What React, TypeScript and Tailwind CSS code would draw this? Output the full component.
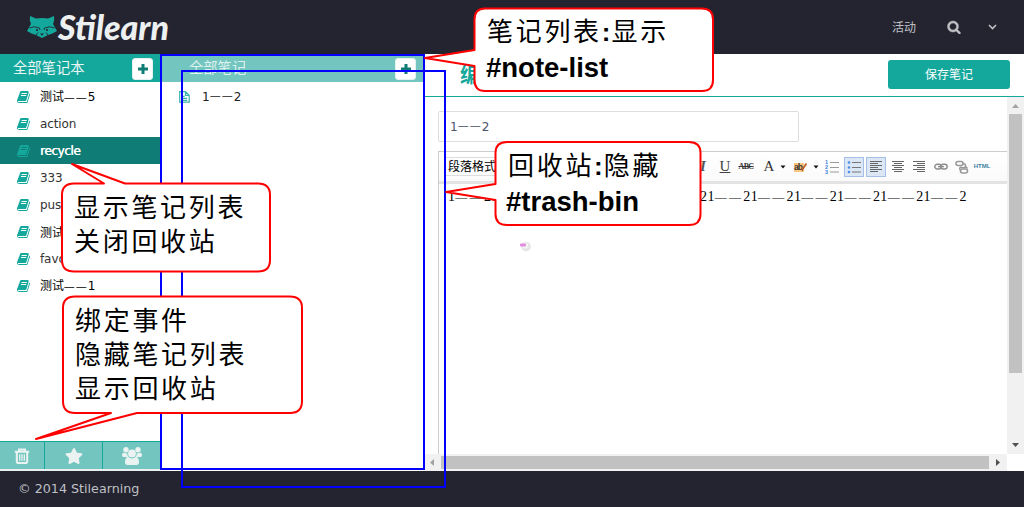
import React from "react";
import { FaStar } from "react-icons/fa";

const ui = "font-['DejaVu_Sans','Noto_Sans_CJK_SC',sans-serif]";
const cjk = "font-['Liberation_Sans','Noto_Sans_CJK_SC',sans-serif]";

function BookIcon({ className }: { className: string }) {
  return (
    <svg viewBox="0 0 1792 1792" className={className} fill="currentColor">
      <path d="M1639 478q40 57 18 129l-275 906q-19 64-76.5 107.5t-122.5 43.5h-923q-77 0-148.5-53.5t-99.5-131.5q-24-67-2-127 0-4 3-27t4-37q1-8-3-21.5t-3-19.5q2-11 8-21t16.5-23.5 16.5-23.5q23-38 45-91.5t30-91.5q3-10 .5-30t-.5-28q3-11 17-28t17-23q21-36 42-92t25-90q1-9-2.5-32t.5-28q4-13 22-30.5t22-22.5q19-26 42.5-84.5t27.5-96.5q1-8-3-25.5t-2-26.5q2-8 9-18t18-23 17-21q8-12 16.5-30.5t15-35 16-36 19.5-32 26.5-23.5 36-11.5 47.5 5.5l-1 3q38-9 51-9h761q74 0 114 56t18 130l-274 906q-36 119-71.5 153.5t-128.5 34.500h-869q-27 0-38 15-11 16-1 43 24 70 144 70h923q29 0 56-15.500t35-41.500l300-987q7-22 5-57 38 15 59 43zm-1064 2q-4 13 2 22.500t20 9.500h608q13 0 25.500-9.500t16.500-22.500l21-64q4-13-2-22.500t-20-9.500h-608q-13 0-25.500 9.500t-16.500 22.500zm-83 256q-4 13 2 22.500t20 9.500h608q13 0 25.500-9.500t16.500-22.500l21-64q4-13-2-22.500t-20-9.500h-608q-13 0-25.500 9.500t-16.500 22.500z" />
    </svg>
  );
}

function SearchIcon() {
  return (
    <svg viewBox="0 0 1792 1792" className="size-[14px]" fill="currentColor" stroke="currentColor" strokeWidth="60">
      <path d="M1216 832q0-185-131.5-316.5t-316.5-131.5-316.5 131.5-131.5 316.5 131.5 316.5 316.5 131.5 316.5-131.5 131.5-316.5zm512 832q0 52-38 90t-90 38q-54 0-90-38l-343-342q-179 124-399 124-143 0-273.5-55.5t-225-150-150-225-55.5-273.5 55.5-273.5 150-225 225-150 273.5-55.5 273.5 55.5 225 150 150 225 55.5 273.5q0 220-124 399l343 343q37 37 37 90z" />
    </svg>
  );
}

function Raccoon() {
  return (
    <svg viewBox="0 0 30 24" className="h-6 w-[30px]">
      <path
        fill="#14a89d"
        d="M3 1 L9 3.6 Q15 2.4 21 3.6 L27 1 Q28 5 26 9 L30 16 L25.500 18.500 L21 20 L15 23 L9 20 L4.500 18.500 L0 16 L4 9 Q2 5 3 1 Z"
      />
      <path
        stroke="#242330"
        strokeWidth=".9"
        fill="none"
        d="M2.500 13 Q7 10.500 12.500 13 L13 15 M27.500 13 Q23 10.500 17.500 13 L17 15 M9 20 L11 17.500 M21 20 L19 17.500"
      />
      <g fill="#242330">
        <circle cx="10" cy="15" r="1.100" />
        <circle cx="20" cy="15" r="1.100" />
        <path d="M13 18.500h4l-2 2.200z" />
      </g>
    </svg>
  );
}

function Dash() {
  return <span className="text-[11px] tracking-[1px]">——</span>;
}

function AddButton() {
  return (
    <button className="mt-px flex h-[22px] w-[21px] items-center justify-center rounded-[3px] border border-[#e4f1f0] bg-white">
      <svg viewBox="0 0 10 10" className="size-[10px]" fill="#0f7d75">
        <path d="M3.500 0h3v3.500H10v3H6.500V10h-3V6.500H0v-3h3.500z" />
      </svg>
    </button>
  );
}

const notebooks: { label: React.ReactNode; active?: boolean }[] = [
  { label: <>测试<Dash />5</> },
  { label: "action" },
  { label: "recycle", active: true },
  { label: "333" },
  { label: "push" },
  { label: "测试" },
  { label: "favorite" },
  { label: <>测试<Dash />1</> },
];

function Sidebar() {
  return (
    <aside className="flex w-40 flex-col bg-white">
      <div className="flex h-7 shrink-0 items-center justify-between bg-[#14a89d] pr-[7px] pl-[13px] text-[14.300px] text-[#ebf6f5]">
        <span className={`pt-0.5 ${cjk}`}>全部笔记本</span>
        <AddButton />
      </div>
      <ul className={`mt-px flex-1 text-xs text-[#333] ${ui}`}>
        {notebooks.map((n, i) => (
          <li
            key={i}
            className={
              n.active
                ? "flex h-[27px] items-center bg-[#0f7d75] pl-[17px] tracking-[-0.400px] text-white [text-shadow:0.4px_0_0_#fff]"
                : "flex h-[27px] items-center pl-[17px] tracking-[-0.100px]"
            }
          >
            <BookIcon className="mr-[9px] size-[14px] text-[#14a89d]" />
            <span className={typeof n.label === "string" && n.label !== "测试" ? "whitespace-nowrap" : "pt-0.5 whitespace-nowrap text-black"}>
              {n.label}
            </span>
          </li>
        ))}
      </ul>
      <div className="flex h-7 shrink-0 border-t border-[#14a89d] bg-[#73c5bf] text-[#ebf3f2]">
        <div className="flex w-[45px] items-center justify-center border-r border-[#14a89d]">
          <svg viewBox="0 0 16 16" className="size-4" fill="none" stroke="currentColor" strokeWidth="2">
            <path d="M.8 3.800h14.400M5 3.500V1.400h6v2.100M2.800 4v9.200q0 1.800 1.600 1.800h7.200q1.600 0 1.600-1.800V4" />
            <path d="M5.700 6.300v6.500M8 6.300v6.500M10.300 6.300v6.500" strokeWidth="1.300" />
          </svg>
        </div>
        <div className="flex w-[58px] items-center justify-center border-r border-[#14a89d]">
          <FaStar className="size-[18px]" />
        </div>
        <div className="flex flex-1 items-center justify-center">
          <svg viewBox="0 0 20 18" className="h-[18px] w-5" fill="currentColor">
            <circle cx="4" cy="2.800" r="2.700" />
            <circle cx="16" cy="2.800" r="2.700" />
            <path d="M1.700 5.600Q4 7 5.300 6 4.700 8.500 6.500 10H1.500Q0 10 0 8.600 0 6 1.700 5.600ZM18.300 5.600Q16 7 14.700 6 15.300 8.500 13.500 10h5Q20 10 20 8.600 20 6 18.300 5.600Z" />
            <circle cx="10" cy="6.400" r="3.900" />
            <path d="M6 9.800Q10 13 14 9.800q3 1 3 5.200Q17 18 14.500 18h-9Q3 18 3 15 3 10.800 6 9.800Z" />
          </svg>
        </div>
      </div>
      <div className="h-0.5 shrink-0 bg-[#e8efee]" />
    </aside>
  );
}

function NoteList() {
  return (
    <section className="w-[265px] bg-white">
      <div className="flex h-7 items-center justify-between bg-[#73c5bf] pr-[9px] pl-[29px] text-[14.300px] text-[#dff2f0]">
        <span className={`pt-0.5 ${cjk}`}>全部笔记</span>
        <AddButton />
      </div>
      <div className={`mt-px flex h-[27px] items-center pl-[19px] text-xs text-[#222] ${ui}`}>
        <svg viewBox="0 0 11 12" className="mr-3 h-3 w-[11px]" fill="none" stroke="#3cb5ac" strokeWidth="1.200">
          <path d="M.7.700h5.800l3.700 3.500v7H.7zM6.500.7v3.700h3.700M2.700 5.300h3M2.700 7.300h5.500M2.700 9.300h5.500" />
        </svg>
        1<Dash />2
      </div>
    </section>
  );
}

function Caret() {
  return (
    <svg viewBox="0 0 10 6" className="h-[6px] w-[10px]">
      <path d="M2.500 1.500h5l-2.500 3z" fill="#111" />
    </svg>
  );
}

function AlignIcon({ kind }: { kind: "left" | "center" | "right" }) {
  const short = { left: "M1 3h8M1 7h8M1 11h8", center: "M3 3h8M3 7h8M3 11h8", right: "M5 3h8M5 7h8M5 11h8" }[kind];
  return (
    <svg viewBox="0 0 14 13" className="h-[13px] w-[14px]" stroke="#666" strokeWidth="1">
      <path d="M1 1.500h12M1 5.500h12M1 9.500h12" />
      <path d={short} transform="translate(0 .5)" />
    </svg>
  );
}

function Toolbar() {
  const cell = "flex h-5 items-center justify-center";
  return (
    <div className="flex h-[30px] shrink-0 items-center border-t border-[#ccc] bg-linear-to-b from-white to-[#fafafa]">
      <div className="ml-[5px] flex h-[19px] w-[100px] items-center border border-[#ddd] pl-[3px] text-xs text-black">
        <span className={cjk}>段落格式</span>
      </div>
      <div className={`${cell} ml-[149px] w-5 font-['Liberation_Serif',serif] text-[15px] font-bold text-[#555] italic`}>I</div>
      <div className={`${cell} ml-0.5 w-5 font-['Liberation_Serif',serif] text-[15px] text-[#444] underline`}>U</div>
      <div className={`${cell} ml-px w-5 font-['Liberation_Serif',serif] text-[8px] font-bold tracking-[-0.600px] text-[#333] line-through`}>ABC</div>
      <div className={`${cell} ml-[4px] w-[18px] font-['Liberation_Serif',serif] text-[15px] text-[#333]`}>A</div>
      <div className={`${cell} w-[10px]`}><Caret /></div>
      <div className={`${cell} ml-[3px] w-5`}>
        <svg viewBox="0 0 16 12" className="h-3 w-4">
          <rect x="1" y="2" width="10" height="9" fill="#fcc77d" />
          <text x="1" y="9" fontSize="8.500" fontWeight="bold" textLength="9" className="font-['Liberation_Sans',sans-serif]" fill="#333">ab</text>
          <path d="M9 9l4.500-6.500" stroke="#c06030" strokeWidth="1.800" />
          <path d="M8.600 10.500l.5-2 1 .8z" fill="#444" />
        </svg>
      </div>
      <div className={`${cell} w-[10px]`}><Caret /></div>
      <div className={`${cell} ml-px w-5`}>
        <svg viewBox="0 0 14 14" className="size-[14px]">
          <path d="M5 2.500h9M5 7.500h9M5 12h9" stroke="#999" />
          <g fill="#3f82dd" fontSize="5.500" fontWeight="bold" className="font-['Liberation_Sans',sans-serif]">
            <text x="0" y="4">1</text><text x="0" y="9">2</text><text x="0" y="14">3</text>
          </g>
        </svg>
      </div>
      <div className={`${cell} ml-0.5 w-5 border border-[#a5bfe8] bg-[#dce7f5]`}>
        <svg viewBox="0 0 14 14" className="size-[14px]">
          <path d="M5 2.500h9M5 7.500h9M5 12h9" stroke="#777" />
          <g fill="#4d8fe6"><circle cx="2" cy="2.500" r="1.300" /><circle cx="2" cy="7.500" r="1.300" /><circle cx="2" cy="12" r="1.300" /></g>
        </svg>
      </div>
      <div className={`${cell} ml-0.5 w-5 border border-[#a5bfe8] bg-[#dce7f5]`}><AlignIcon kind="left" /></div>
      <div className={`${cell} ml-0.5 w-5`}><AlignIcon kind="center" /></div>
      <div className={`${cell} ml-px w-5`}><AlignIcon kind="right" /></div>
      <div className={`${cell} ml-0.5 w-5`}>
        <svg viewBox="0 0 14 8" className="h-2 w-[14px]" fill="none" stroke="#8d8d8d" strokeWidth="1.400">
          <rect x=".8" y="1.200" width="6.500" height="4.800" rx="2.400" />
          <rect x="6.700" y="1.200" width="6.500" height="4.800" rx="2.400" />
          <path d="M4 3.600h6" />
        </svg>
      </div>
      <div className={`${cell} ml-px w-5`}>
        <svg viewBox="0 0 14 14" className="size-[14px]" fill="none" stroke="#999" strokeWidth="1.600">
          <rect x="1" y="1.500" width="7" height="4" rx="2" />
          <rect x="5.500" y="9" width="7" height="4" rx="2" />
          <path d="M7 3.500q4 0 3.500 2.500T7 7.500 5 10M10.500 6.500l2 2" />
        </svg>
      </div>
      <div className={`${cell} w-5 font-['Liberation_Sans',sans-serif] text-[6px] font-bold text-[#3b7f9f]`}>HTML</div>
    </div>
  );
}

function Editor() {
  return (
    <main className="flex min-w-0 flex-1 flex-col bg-white">
      <div className="flex h-[43px] shrink-0 items-center justify-between border-b border-[#14a89d] pr-[14px] pl-[35px]">
        <h2 className={`text-[21px] font-bold text-[#14a89d] ${cjk}`}>编辑</h2>
        <button className={`mb-px h-[29px] w-[122px] rounded-[3px] bg-[#14a89d] pt-px text-xs text-white ${cjk}`}>保存笔记</button>
      </div>
      <div className="flex min-h-0 flex-1">
        <div className="flex min-w-0 flex-1 flex-col">
          <div className="flex flex-1 flex-col pt-[14px] pl-[13px]">
            <div className={`flex h-[31px] w-[361px] shrink-0 items-center rounded-[2px] border border-[#ddd] pl-[11px] text-xs text-[#49506b] ${ui}`}>
              1<Dash />2
            </div>
            <div className="mt-[9px] flex flex-1 flex-col border-l border-[#ccc]">
              <Toolbar />
              <div className="h-[3px] bg-[#e3e3e3]" />
              <p className="mt-[3px] ml-[9px] h-5 font-['Liberation_Serif',serif] text-[14px] leading-[20px] tracking-[0.300px] whitespace-nowrap text-black">
                {Array.from({ length: 12 }, (_, i) => (
                  <React.Fragment key={i}>
                    1<span className="text-[12px] tracking-[2.300px]">——</span>2
                  </React.Fragment>
                ))}
              </p>
              <div className="mt-[34px] ml-[81px] h-[11px] w-3">
                <svg viewBox="0 0 12 11" className="h-[11px] w-3">
                  <circle cx="6" cy="5.500" r="4.800" fill="#e5e5e5" />
                  <circle cx="5" cy="4.500" r="3" fill="#f4f4f4" />
                  <rect x="0" y="2.500" width="6" height="3" rx="1" fill="#e08ae0" />
                </svg>
              </div>
            </div>
          </div>
          <div className="flex h-[17px] shrink-0 items-center bg-[#f1f1f1]">
            <svg viewBox="0 0 16 17" className="h-[17px] w-4"><path d="M9 5v7L5 8.500z" fill="#a3a3a3" /></svg>
            <div className="h-[13px] flex-1 bg-[#c1c1c1]" />
            <svg viewBox="0 0 18 17" className="h-[17px] w-[18px]"><path d="M7 5v7l4-3.500z" fill="#505050" /></svg>
          </div>
        </div>
        <div className="flex w-[17px] flex-col items-center">
          <div className="flex w-full flex-1 flex-col items-center bg-[#f1f1f1]">
            <svg viewBox="0 0 17 17" className="size-[17px]"><path d="M5 11h7L8.500 7z" fill="#a3a3a3" /></svg>
            <div className="h-[259px] w-[13px] bg-[#c1c1c1]" />
            <div className="flex-1" />
            <svg viewBox="0 0 17 17" className="size-[17px]"><path d="M5 6h7l-3.500 4z" fill="#505050" /></svg>
          </div>
          <div className="h-[17px]" />
        </div>
      </div>
    </main>
  );
}

function Annotations() {
  const note = "absolute whitespace-nowrap text-black font-['Liberation_Sans','Noto_Sans_CJK_SC',sans-serif]";
  return (
    <div className="pointer-events-none absolute inset-0">
      <div className="absolute top-[54px] left-[160px] h-[416px] w-[265px] border-2 border-[#00f]" />
      <div className="absolute top-[70px] left-[181px] h-[418px] w-[265px] border-2 border-[#00f]" />
      <svg viewBox="0 0 1024 507" className="absolute inset-0 h-[507px] w-[1024px]" fill="#fff" stroke="#f00" strokeWidth="2" strokeLinejoin="round">
        <path d="M485 8.500H702Q713 8.500 713 19.500V80Q713 91 702 91H485Q474.500 91 474.500 80V66L425 58L474.500 50V19.500Q474.500 8.500 485 8.500Z" />
        <path d="M507 142H689Q700.500 142 700.500 153V214Q700.500 225 689 225H507Q495.500 225 495.500 214V200L446 192L495.500 184V153Q495.500 142 507 142Z" />
        <path d="M74 183.500H104L72 164L125 183.500H258Q270 183.500 270 195V260Q270 271.500 258 271.500H74Q62 271.500 62 260V195Q62 183.500 74 183.500Z" />
        <path d="M75 296.500H290Q302 296.500 302 308V401Q302 413 290 413H137L36 439L111 413H75Q63 413 63 401V308Q63 296.500 75 296.500Z" />
      </svg>
      <div className={`${note} top-[15px] left-[487px] text-[26px] leading-[35px]`}>
        <div className="tracking-[2.700px]">笔记列表<b className="tracking-[1px]">:</b>显示</div>
        <b className="-ml-px block text-[27.500px]">#note-list</b>
      </div>
      <div className={`${note} top-[149px] left-[508px] text-[26px] leading-[35px]`}>
        <div className="tracking-[2.700px]">回收站<b className="tracking-[1px]">:</b>隐藏</div>
        <b className="-ml-[2px] block text-[27.500px]">#trash-bin</b>
      </div>
      <div className={`${note} top-[191px] left-[74px] text-[26px] leading-[34px] tracking-[2.700px]`}>
        <div>显示笔记列表</div>
        <div>关闭回收站</div>
      </div>
      <div className={`${note} top-[304px] left-[75px] text-[26px] leading-[34px] tracking-[2.700px]`}>
        <div>绑定事件</div>
        <div>隐藏笔记列表</div>
        <div>显示回收站</div>
      </div>
    </div>
  );
}

export default function App() {
  return (
    <div className="relative flex h-[507px] w-[1024px] flex-col overflow-hidden bg-white">
      <header className="flex h-[54px] shrink-0 items-center justify-between bg-[#242330] text-[#bfc1c5]">
        <div className="flex items-center pl-[27px]">
          <Raccoon />
          <svg viewBox="0 0 120 54" className="h-[54px] w-[120px]">
            <text x="1" y="40" fontSize="35" fontWeight="900" fontStyle="italic" textLength="111" lengthAdjust="spacingAndGlyphs" fill="#edf0f1" className="font-['Lato',sans-serif]">
              Stilearn
            </text>
          </svg>
        </div>
        <nav className="flex items-center pr-[27px] text-xs">
          <span className={`pt-0.5 ${cjk}`}>活动</span>
          <span className="ml-[31px]"><SearchIcon /></span>
          <svg viewBox="0 0 9 6" className="ml-[27px] h-[6px] w-[9px]" fill="none" stroke="currentColor" strokeWidth="1.600">
            <path d="M1 1l3.500 3.500L8 1" />
          </svg>
        </nav>
      </header>
      <div className="flex h-[417px] shrink-0">
        <Sidebar />
        <NoteList />
        <Editor />
      </div>
      <footer className={`flex h-9 items-center bg-[#242330] pl-[18px] text-[12.700px] text-[#bfc1c5] ${ui}`}>© 2014 Stilearning</footer>
      <Annotations />
    </div>
  );
}
